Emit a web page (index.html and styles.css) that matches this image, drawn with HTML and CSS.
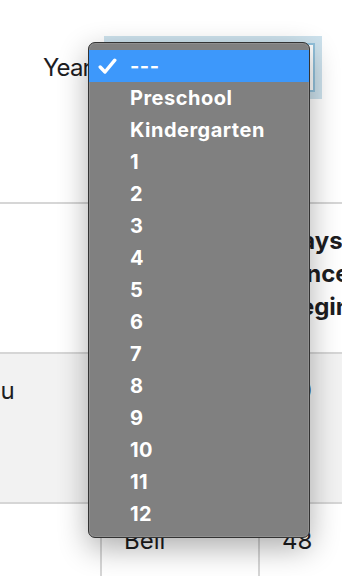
FILE: index.html
```html
<!DOCTYPE html>
<html>
<head>
<meta charset="utf-8">
<link rel="stylesheet" href="styles.css">
</head>
<body>
<div class="page">
  <div class="filter">
    <label class="label">Year</label>
    <div class="select"></div>
  </div>
  <div class="table-wrap">
    <table class="grid">
      <colgroup>
        <col class="w1">
        <col class="w2">
        <col class="w3">
      </colgroup>
      <tr class="head">
        <th class="c1"></th>
        <th class="c2">Last Name</th>
        <th class="c3">Days Since Beginning</th>
      </tr>
      <tr class="alt">
        <td class="c1">Liu</td>
        <td class="c2">Chen</td>
        <td class="c3">30</td>
      </tr>
      <tr>
        <td class="c1"></td>
        <td class="c2">Bell</td>
        <td class="c3">48</td>
      </tr>
    </table>
  </div>
  <div class="menu">
    <div class="item selected">
      <span class="check"><svg width="19" height="17" viewBox="0 0 19 17"><path d="M2.2 9 L7 14 L16.8 2.2" fill="none" stroke="#fff" stroke-width="3.4" stroke-linecap="round" stroke-linejoin="round"/></svg></span>
      <span class="text">---</span>
    </div>
    <div class="item"><span class="check"></span><span class="text">Preschool</span></div>
    <div class="item"><span class="check"></span><span class="text">Kindergarten</span></div>
    <div class="item"><span class="check"></span><span class="text">1</span></div>
    <div class="item"><span class="check"></span><span class="text">2</span></div>
    <div class="item"><span class="check"></span><span class="text">3</span></div>
    <div class="item"><span class="check"></span><span class="text">4</span></div>
    <div class="item"><span class="check"></span><span class="text">5</span></div>
    <div class="item"><span class="check"></span><span class="text">6</span></div>
    <div class="item"><span class="check"></span><span class="text">7</span></div>
    <div class="item"><span class="check"></span><span class="text">8</span></div>
    <div class="item"><span class="check"></span><span class="text">9</span></div>
    <div class="item"><span class="check"></span><span class="text">10</span></div>
    <div class="item"><span class="check"></span><span class="text">11</span></div>
    <div class="item"><span class="check"></span><span class="text">12</span></div>
  </div>
</div>
</body>
</html>
```
FILE: styles.css
```css
html, body {
  margin: 0;
  padding: 0;
  background: #ffffff;
  overflow: hidden;
}
body {
  font-family: Inter, "Liberation Sans", sans-serif;
  color: #1d1d1f;
}
.page {
  position: relative;
  width: 342px;
  height: 576px;
  overflow: hidden;
}
.filter {
  display: flex;
  align-items: center;
  gap: 20px;
  padding: 43px 0 110px 43px;
}
.label {
  font-size: 24px;
  line-height: 29px;
  letter-spacing: -0.9px;
}
.select {
  width: 200px;
  height: 45px;
  border: 2px solid #93c2dc;
  background: #fff;
  outline: 7px solid #cde2ed;
}
.table-wrap {
  overflow: hidden;
}
.grid {
  border-collapse: collapse;
  table-layout: fixed;
  width: 456px;
  margin-left: -41px;
  font-size: 24px;
  line-height: 33px;
}
.w1 { width: 142px; }
.w2 { width: 158px; }
.w3 { width: 156px; }
.grid th, .grid td {
  text-align: left;
  vertical-align: top;
  padding: 20px 22px 0 22px;
  border-top: 2px solid #d6d6d6;
  border-left: 2px solid #d6d6d6;
  height: 128px;
}
.grid th {
  font-weight: 700;
}
.grid th.c3 {
  padding-left: 24px;
}
.grid td {
  font-weight: 400;
}
.grid .c1 { border-left: none; }
.grid .alt td { background: #f2f2f2; }
.menu {
  position: absolute;
  left: 88px;
  top: 42px;
  width: 222px;
  box-sizing: border-box;
  padding: 7px 0;
  background: #808080;
  border: 1px solid #333333;
  border-radius: 7px;
  box-shadow: 0 10px 30px rgba(0, 0, 0, 0.32), inset 0 0 0 1px rgba(255, 255, 255, 0.12);
}
.item {
  display: flex;
  align-items: center;
  height: 32px;
  color: #ffffff;
  font-size: 20px;
  font-weight: 700;
  letter-spacing: 0.5px;
}
.item.selected {
  background: #3d98fb;
}
.check {
  width: 41px;
  height: 32px;
  display: flex;
  align-items: center;
  padding-left: 9px;
  box-sizing: border-box;
}
.check svg { display: block; }
.text {
  line-height: 32px;
}
```
